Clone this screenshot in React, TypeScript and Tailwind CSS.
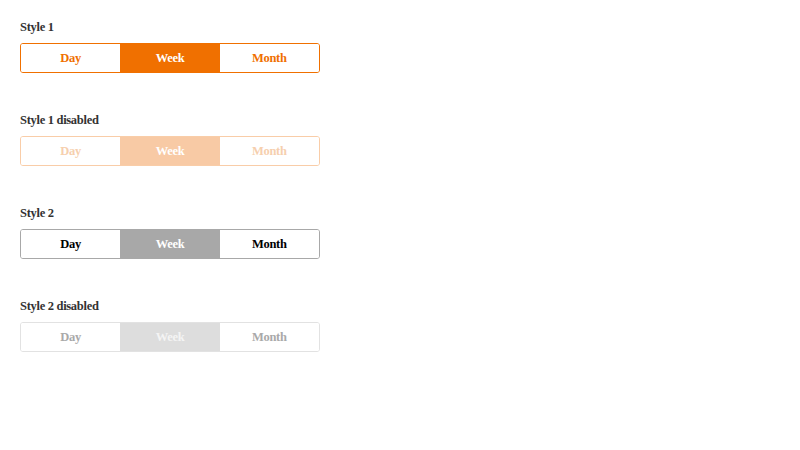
const options = ["Day", "Week", "Month"];

type Variant = {
  label: string;
  border: string;
  activeBg: string;
  activeText: string;
  text: string;
};

const variants: Variant[] = [
  {
    label: "Style 1",
    border: "border-[#f07000]",
    activeBg: "bg-[#f07000]",
    activeText: "text-white",
    text: "text-[#f07000]",
  },
  {
    label: "Style 1 disabled",
    border: "border-[#f9cda8]",
    activeBg: "bg-[#f8caa5]",
    activeText: "text-white",
    text: "text-[#f6cfae]",
  },
  {
    label: "Style 2",
    border: "border-[#a8a8a8]",
    activeBg: "bg-[#a8a8a8]",
    activeText: "text-white",
    text: "text-black",
  },
  {
    label: "Style 2 disabled",
    border: "border-[#e2e2e2]",
    activeBg: "bg-[#dddddd]",
    activeText: "text-[#f4f4f4]",
    text: "text-[#a9a9a9]",
  },
];

function Segmented({ v }: { v: Variant }) {
  return (
    <div className={`flex w-[300px] h-[30px] border rounded-[3px] overflow-hidden ${v.border}`}>
      {options.map((o) => {
        const active = o === "Week";
        return (
          <div
            key={o}
            className={`flex-1 flex items-center justify-center pt-[1px] text-[12.5px] tracking-[-0.3px] font-bold ${
              active ? `${v.activeBg} ${v.activeText}` : `bg-white ${v.text}`
            }`}
          >
            {o}
          </div>
        );
      })}
    </div>
  );
}

export default function App() {
  return (
    <div
      className="w-[800px] h-[450px] bg-white px-5 pt-[19px]"
      style={{ fontFamily: '"Liberation Serif", serif' }}
    >
      {variants.map((v) => (
        <div key={v.label} className="mb-[39px]">
          <div className="text-[12.5px] leading-4 tracking-[-0.3px] font-bold text-[#333333] mb-[8px]">
            {v.label}
          </div>
          <Segmented v={v} />
        </div>
      ))}
    </div>
  );
}
